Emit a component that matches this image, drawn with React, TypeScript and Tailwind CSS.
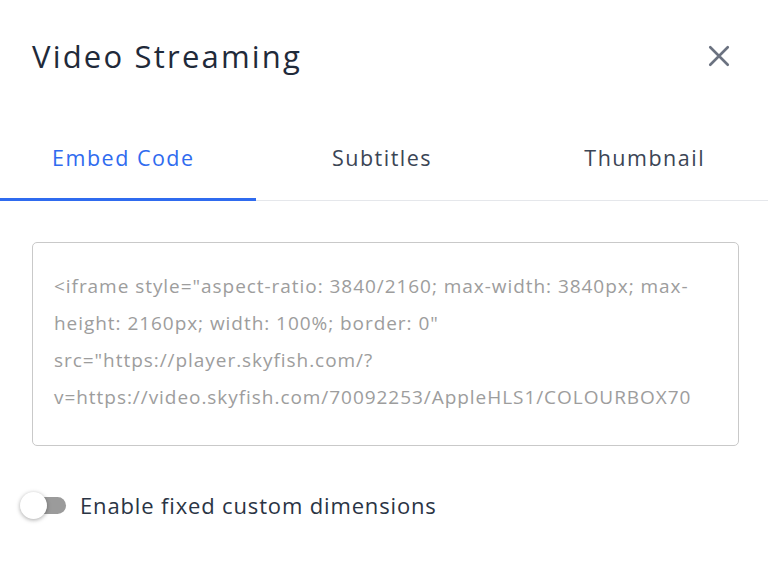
import { useState } from 'react'

const tabs = [
  { label: 'Embed Code', pad: 'pr-[9px]' },
  { label: 'Subtitles', pad: 'pl-[3px]' },
  { label: 'Thumbnail', pad: 'pl-[16px]' },
]

// shown as it wraps in the dialog
const embedLines = [
  '<iframe style="aspect-ratio: 3840/2160; max-width: 3840px; max-',
  'height: 2160px; width: 100%; border: 0"',
  'src="https://player.skyfish.com/?',
  'v=https://video.skyfish.com/70092253/AppleHLS1/COLOURBOX70',
]

export default function App() {
  const [active, setActive] = useState(0)
  const [fixed, setFixed] = useState(false)

  return (
    <div
      className="w-[768px] h-[565px] bg-white overflow-hidden"
      style={{ fontFamily: '"Open Sans", Lato, sans-serif' }}
    >
      {/* Header */}
      <div className="flex items-center justify-between pl-8 pr-[34px] pt-[34px]">
        <h1 className="text-[31px] leading-[44px] tracking-[2.2px] text-[#1f2a3a]">Video Streaming</h1>
        <button className="text-[#6b7280]" aria-label="Close">
          <svg width="30" height="30" viewBox="0 0 24 24" fill="none" stroke="currentColor" strokeWidth="2.1" strokeLinecap="round">
            <path d="M5 5l14 14M19 5L5 19" />
          </svg>
        </button>
      </div>

      {/* Tabs */}
      <div className="mt-[54px] flex border-b border-[#e5e7eb]">
        {tabs.map((t, i) => (
          <button
            key={t.label}
            onClick={() => setActive(i)}
            className={
              'flex-1 h-[69px] pb-[13px] text-[21.5px] tracking-[1.5px] -mb-px border-b-[3px] ' +
              t.pad +
              ' ' +
              (i === active ? 'text-[#2f6bef] border-[#2f6bef]' : 'text-[#3b4555] border-transparent')
            }
          >
            {t.label}
          </button>
        ))}
      </div>

      {/* Embed code box */}
      <div className="pl-8 pr-[29px] pt-[41px]">
        <div className="h-[204px] rounded-[5px] border border-[#c9c9c9] px-[21px] pt-[25px] overflow-hidden">
          <div className="text-[19px] leading-[37px] tracking-[0.95px] text-[#9d9d9d]">
            {embedLines.map((l) => (
              <div key={l} className="whitespace-nowrap">{l}</div>
            ))}
          </div>
        </div>
      </div>

      {/* Toggle */}
      <div className="flex items-center gap-[14px] pl-5 pt-[43px]">
        <button
          onClick={() => setFixed(!fixed)}
          className="relative w-[46px] h-[28px] flex items-center"
          aria-label="Enable fixed custom dimensions"
        >
          <span className="absolute left-[2px] right-0 h-[17px] rounded-full bg-[#9b9b9b]" />
          <span
            className={
              'absolute top-0 w-[27px] h-[27px] rounded-full bg-white shadow-[0_1px_4px_rgba(0,0,0,0.35)] ' +
              (fixed ? 'left-[19px]' : 'left-0')
            }
          />
        </button>
        <span className="text-[22px] tracking-[0.85px] text-[#2a3444]">Enable fixed custom dimensions</span>
      </div>
    </div>
  )
}
